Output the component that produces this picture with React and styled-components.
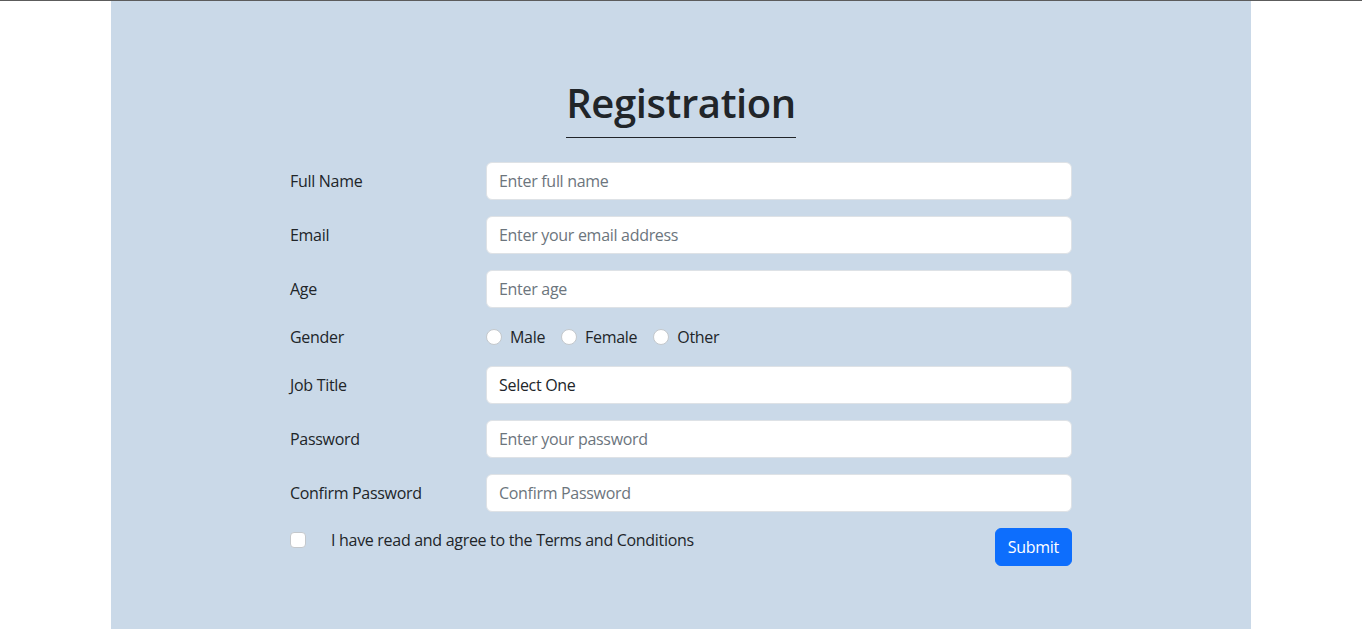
import React from 'react';
import styled, { createGlobalStyle } from 'styled-components';

const GlobalStyle = createGlobalStyle`
  * { box-sizing: border-box; }
  body {
    margin: 0;
    border-top: 1px solid #5c5c5c;
    background: #fff;
    font-family: 'Open Sans', 'Noto Sans', sans-serif;
    font-size: 16px;
    line-height: 1.5;
    letter-spacing: -0.3px;
    color: #212529;
  }
`;

const Container = styled.div`
  width: 1140px;
  min-height: 628px;
  margin: 0 auto;
  background: #cad9e8;
  padding: 78px 179px 40px;
`;

const Heading = styled.div`
  display: flex;
  justify-content: center;
  margin-bottom: 24px;
`;

const Title = styled.h1`
  margin: 0;
  font-size: 40px;
  font-weight: 600;
  letter-spacing: -0.4px;
  line-height: 1.2;
  padding-bottom: 10px;
  border-bottom: 1px solid #212529;
`;

const Row = styled.div`
  display: flex;
  align-items: center;
  height: ${(p) => (p.short ? '26px' : '38px')};
  margin-bottom: 16px;
`;

const Label = styled.label`
  width: 196px;
  flex-shrink: 0;
`;

const Input = styled.input`
  flex: 1;
  height: 38px;
  padding: 6px 12px;
  font: inherit;
  letter-spacing: inherit;
  color: #212529;
  background: #fff;
  border: 1px solid #dee2e6;
  border-radius: 6px;
  outline: none;
  &::placeholder { color: #6c757d; }
`;

const Select = styled.select`
  flex: 1;
  height: 38px;
  padding: 6px 12px;
  font: inherit;
  letter-spacing: inherit;
  color: #212529;
  background: #fff;
  border: 1px solid #dee2e6;
  border-radius: 6px;
  appearance: none;
  outline: none;
`;

const Radios = styled.div`
  display: flex;
  align-items: center;
  gap: 16px;
`;

const RadioItem = styled.label`
  display: flex;
  align-items: center;
  gap: 8px;
`;

const Radio = styled.input`
  appearance: none;
  margin: 0;
  width: 16px;
  height: 16px;
  border-radius: 50%;
  background: #fff;
  border: 1px solid #c4c8cc;
`;

const Footer = styled.div`
  display: flex;
  align-items: flex-start;
  justify-content: space-between;
`;

const Agree = styled.label`
  display: flex;
  align-items: center;
  gap: 25px;
  height: 24px;
`;

const Check = styled.input`
  appearance: none;
  margin: 0;
  width: 16px;
  height: 16px;
  border-radius: 4px;
  background: #fff;
  border: 1px solid #c4c8cc;
`;

const Submit = styled.button`
  height: 38px;
  padding: 6px 12px;
  font: inherit;
  letter-spacing: inherit;
  color: #fff;
  background: #0d6efd;
  border: 1px solid #0d6efd;
  border-radius: 6px;
  cursor: pointer;
`;

const fields = [
  { label: 'Full Name', type: 'text', placeholder: 'Enter full name' },
  { label: 'Email', type: 'email', placeholder: 'Enter your email address' },
  { label: 'Age', type: 'number', placeholder: 'Enter age' },
];

const passwords = [
  { label: 'Password', placeholder: 'Enter your password' },
  { label: 'Confirm Password', placeholder: 'Confirm Password' },
];

const App = () => {
  return (
    <>
      <GlobalStyle />
      <Container>
        <Heading>
          <Title>Registration</Title>
        </Heading>
        <form onSubmit={(e) => e.preventDefault()}>
          {fields.map((f) => (
            <Row key={f.label}>
              <Label>{f.label}</Label>
              <Input type={f.type} placeholder={f.placeholder} />
            </Row>
          ))}
          <Row short>
            <Label>Gender</Label>
            <Radios>
              {['Male', 'Female', 'Other'].map((g) => (
                <RadioItem key={g}>
                  <Radio type="radio" name="gender" value={g} />
                  {g}
                </RadioItem>
              ))}
            </Radios>
          </Row>
          <Row>
            <Label>Job Title</Label>
            <Select defaultValue="">
              <option value="">Select One</option>
              <option>Developer</option>
              <option>Designer</option>
              <option>Manager</option>
            </Select>
          </Row>
          {passwords.map((f) => (
            <Row key={f.label}>
              <Label>{f.label}</Label>
              <Input type="password" placeholder={f.placeholder} />
            </Row>
          ))}
          <Footer>
            <Agree>
              <Check type="checkbox" />
              I have read and agree to the Terms and Conditions
            </Agree>
            <Submit type="submit">Submit</Submit>
          </Footer>
        </form>
      </Container>
    </>
  );
};

export default App;
